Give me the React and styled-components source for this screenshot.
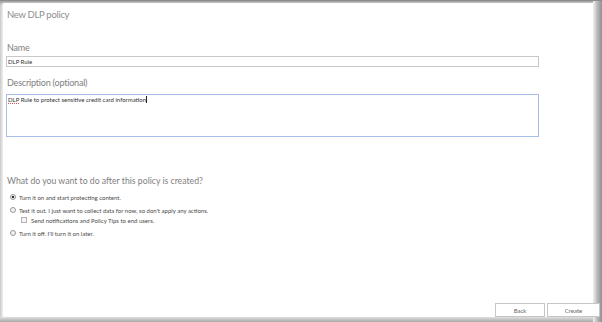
import React, { useState } from "react";
import styled, { createGlobalStyle } from "styled-components";

const GlobalStyle = createGlobalStyle`
  html, body {
    margin: 0;
    padding: 0;
    background: #ffffff;
  }
  * {
    box-sizing: border-box;
  }
`;

const App = () => {
  const initialState = {
    name: "DLP Rule",
    mode: "on",
  };

  const [formData, setFormData] = useState(initialState);

  const onChangeHandler = (e) => {
    setFormData({ ...formData, [e.target.name]: e.target.value });
  };

  return (
    <Frame>
      <GlobalStyle />
      <Panel>
        <Title>New DLP policy</Title>
        <Label htmlFor="name" top={"19px"}>
          Name
        </Label>
        <TextInput
          id="name"
          name="name"
          value={formData.name}
          onChange={onChangeHandler}
        />
        <Label htmlFor="description" top={"9px"}>
          Description (optional)
        </Label>
        <TextArea id="description">
          <Misspelled>DLP</Misspelled> Rule to protect sensitive credit card
          information<Caret />
        </TextArea>
        <Question>What do you want to do after this policy is created?</Question>
        <Options>
          <Option>
            <Radio checked={formData.mode === "on"} />
            Turn it on and start protecting content.
          </Option>
          <Option gap={"5px"}>
            <Radio checked={formData.mode === "test"} />
            Test it out. I just want to collect data for now, so don't apply any actions.
          </Option>
          <Option gap={"2px"} indent>
            <Check />
            Send notifications and Policy Tips to end users.
          </Option>
          <Option gap={"5px"}>
            <Radio checked={formData.mode === "off"} />
            Turn it off. I'll turn it on later.
          </Option>
        </Options>
        <Footer>
          <Button width={"50px"}>Back</Button>
          <Button width={"53px"}>Create</Button>
        </Footer>
      </Panel>
    </Frame>
  );
};

const Frame = styled.div`
  width: 602px;
  height: 322px;
  display: flex;
  background: linear-gradient(90deg, #d4d4d4 0px, #ececec 3px, #ffffff 4px);
  border-top: 1px solid #8c8c8c;
  box-shadow: inset 0 3px 3px -1px #9a9a9a;
  padding: 2px 8px 5px 3px;
  position: relative;
  overflow: hidden;

  &::after {
    content: "";
    position: absolute;
    top: 0;
    right: 0;
    width: 9px;
    height: 100%;
    background: linear-gradient(90deg, #f2f2f2 0px, #bdbdbd 4px, #8f8f8f 9px);
  }

  &::before {
    content: "";
    position: absolute;
    left: 0;
    bottom: 0;
    width: 100%;
    height: 5px;
    background: linear-gradient(180deg, #e0e0e0 0px, #a8a8a8 5px);
  }
`;

const Panel = styled.div`
  flex: 1;
  display: flex;
  flex-direction: column;
  padding: 5px 0 0 4px;
  font-family: Lato, "Open Sans", "Liberation Sans", sans-serif;
  color: #444444;
  background: #ffffff;
`;

const Title = styled.h1`
  margin: 0;
  font-size: 9.5px;
  font-weight: 400;
  line-height: 14px;
  letter-spacing: -0.3px;
  color: #8e8e8e;
`;

const Label = styled.label`
  margin-top: ${({ top }) => top};
  font-size: 9px;
  line-height: 14px;
  letter-spacing: -0.2px;
  color: #808080;
`;

const TextInput = styled.input`
  margin: 1px 0 0 -1px;
  width: 533px;
  height: 11px;
  border: 1px solid #c8c8c8;
  padding: 0 1px;
  font-family: inherit;
  font-size: 6px;
  color: #333333;
  outline: none;
`;

const TextArea = styled.div`
  margin: 4px 0 0 -1px;
  width: 533px;
  height: 43px;
  border: 1px solid #a7bfe8;
  padding: 1px 1px;
  font-size: 6px;
  line-height: 8px;
  color: #333333;
`;

const Misspelled = styled.span`
  border-bottom: 1px dotted #e05050;
`;

const Caret = styled.span`
  display: inline-block;
  width: 1px;
  height: 7px;
  background: #222222;
  vertical-align: -1px;
`;

const Question = styled.div`
  margin-top: 37px;
  font-size: 8.7px;
  line-height: 14px;
  color: #808080;
`;

const Options = styled.div`
  display: flex;
  flex-direction: column;
  margin-top: 5px;
  padding-left: 3px;
`;

const Option = styled.div`
  display: flex;
  align-items: center;
  gap: 3px;
  height: 8px;
  margin-top: ${({ gap }) => gap || "0"};
  margin-left: ${({ indent }) => (indent ? "11px" : "0")};
  font-size: 6px;
  color: #4a4a4a;
`;

const Radio = styled.span`
  width: 6px;
  height: 6px;
  border-radius: 50%;
  border: 1px solid #9a9a9a;
  background: ${({ checked }) =>
    checked ? "radial-gradient(circle, #333 0 1.3px, #f4f4f4 1.6px)" : "#f2f2f2"};
  flex-shrink: 0;
`;

const Check = styled.span`
  width: 6px;
  height: 6px;
  border: 1px solid #b0b0b0;
  background: #f6f6f6;
  flex-shrink: 0;
  margin-right: 1px;
`;

const Footer = styled.div`
  margin-top: auto;
  margin-bottom: 0;
  display: flex;
  justify-content: flex-end;
  gap: 2px;
  margin-right: -6px;
  position: relative;
  z-index: 1;
`;

const Button = styled.button`
  width: ${({ width }) => width};
  height: 14px;
  padding: 0;
  border: 1px solid #c6c6c6;
  background: #ffffff;
  font-family: inherit;
  font-size: 6px;
  color: #666666;
`;

export default App;
